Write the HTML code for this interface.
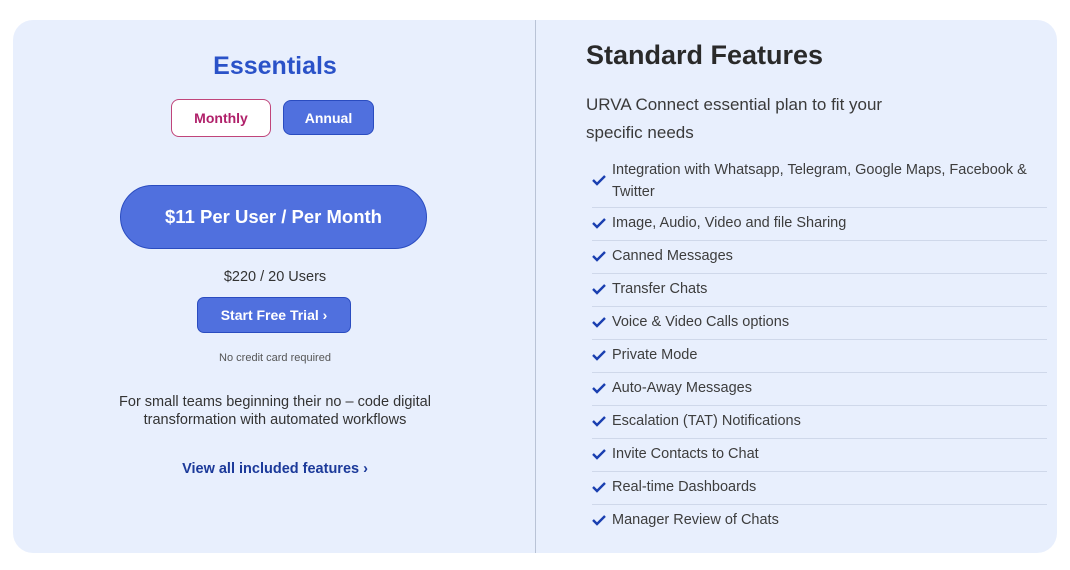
<!DOCTYPE html>
<html><head><meta charset="utf-8"><style>
*{margin:0;padding:0;box-sizing:border-box}
body{width:1070px;height:570px;background:#fff;font-family:"Liberation Sans",sans-serif;position:relative;overflow:hidden}
.card{position:absolute;left:13px;top:20px;width:1044px;height:533px;background:#e8effd;border-radius:20px}
.div{position:absolute;left:535px;top:20px;width:1px;height:533px;background:#b9c3d6}
.abs{position:absolute}
.c{text-align:center}
h1{position:absolute;left:150px;width:250px;top:52px;text-align:center;color:#2a52c8;font-size:25px;font-weight:bold}
.btn{position:absolute;display:flex;align-items:center;justify-content:center;font-weight:bold}
.row{position:absolute;left:592px;width:455px;height:33px;border-bottom:1px solid #cfd8ea;font-size:14.5px;color:#3d3d3d}
.row svg{position:absolute;left:0;top:0}
.row span{position:absolute;left:20px;top:7px}
</style></head><body>
<div class="card"></div><div class="div"></div>
<h1>Essentials</h1>
<div class="btn" style="left:171px;top:99px;width:100px;height:38px;background:#fff;border:1px solid #c0457a;border-radius:8px;color:#b0206a;font-size:14px">Monthly</div>
<div class="btn" style="left:283px;top:100px;width:91px;height:35px;background:#5070de;border:1px solid #2a4cc0;border-radius:8px;color:#fff;font-size:14px">Annual</div>
<div class="btn" style="left:120px;top:185px;width:307px;height:64px;background:#5070de;border:1px solid #2a4cc0;border-radius:32px;color:#fff;font-size:18.5px">$11 Per User / Per Month</div>
<div class="abs c" style="left:150px;width:250px;top:269px;font-size:14.5px;color:#333">$220 / 20 Users</div>
<div class="btn" style="left:197px;top:297px;width:154px;height:36px;background:#5070de;border:1px solid #2a4cc0;border-radius:7px;color:#fff;font-size:14px">Start Free Trial ›</div>
<div class="abs c" style="left:150px;width:250px;top:352px;font-size:11px;color:#555">No credit card required</div>
<div class="abs c" style="left:90px;width:370px;top:393px;font-size:14.5px;line-height:18px;color:#333">For small teams beginning their no – code digital transformation with automated workflows</div>
<div class="abs c" style="left:150px;width:250px;top:461px;font-size:14.5px;font-weight:bold;color:#1c3a9a">View all included features ›</div>
<div class="abs" style="left:586px;top:40px;font-size:27px;font-weight:bold;color:#2a2a2a">Standard Features</div>
<div class="abs" style="left:586px;top:91px;font-size:17px;line-height:28px;color:#3a3a3a;width:340px">URVA Connect essential plan to fit your specific needs</div>
<div class="row" style="top:158px;height:50px"><svg width="14" height="40" viewBox="0 0 14 40"><path d="M1 22l4 4 8-8" stroke="#1a3fb0" stroke-width="2.4" fill="none"/></svg><span style="top:1px;line-height:22px;width:435px">Integration with Whatsapp, Telegram, Google Maps, Facebook &amp; Twitter</span></div>
<div class="row" style="top:208px"><svg width="14" height="33"><path d="M1 15l4 4 8-8" stroke="#1a3fb0" stroke-width="2.4" fill="none"/></svg><span>Image, Audio, Video and file Sharing</span></div>
<div class="row" style="top:241px"><svg width="14" height="33"><path d="M1 15l4 4 8-8" stroke="#1a3fb0" stroke-width="2.4" fill="none"/></svg><span>Canned Messages</span></div>
<div class="row" style="top:274px"><svg width="14" height="33"><path d="M1 15l4 4 8-8" stroke="#1a3fb0" stroke-width="2.4" fill="none"/></svg><span>Transfer Chats</span></div>
<div class="row" style="top:307px"><svg width="14" height="33"><path d="M1 15l4 4 8-8" stroke="#1a3fb0" stroke-width="2.4" fill="none"/></svg><span>Voice &amp; Video Calls options</span></div>
<div class="row" style="top:340px"><svg width="14" height="33"><path d="M1 15l4 4 8-8" stroke="#1a3fb0" stroke-width="2.4" fill="none"/></svg><span>Private Mode</span></div>
<div class="row" style="top:373px"><svg width="14" height="33"><path d="M1 15l4 4 8-8" stroke="#1a3fb0" stroke-width="2.4" fill="none"/></svg><span>Auto-Away Messages</span></div>
<div class="row" style="top:406px"><svg width="14" height="33"><path d="M1 15l4 4 8-8" stroke="#1a3fb0" stroke-width="2.4" fill="none"/></svg><span>Escalation (TAT) Notifications</span></div>
<div class="row" style="top:439px"><svg width="14" height="33"><path d="M1 15l4 4 8-8" stroke="#1a3fb0" stroke-width="2.4" fill="none"/></svg><span>Invite Contacts to Chat</span></div>
<div class="row" style="top:472px"><svg width="14" height="33"><path d="M1 15l4 4 8-8" stroke="#1a3fb0" stroke-width="2.4" fill="none"/></svg><span>Real-time Dashboards</span></div>
<div class="row" style="top:505px;border:none"><svg width="14" height="33"><path d="M1 15l4 4 8-8" stroke="#1a3fb0" stroke-width="2.4" fill="none"/></svg><span>Manager Review of Chats</span></div>
</body></html>
